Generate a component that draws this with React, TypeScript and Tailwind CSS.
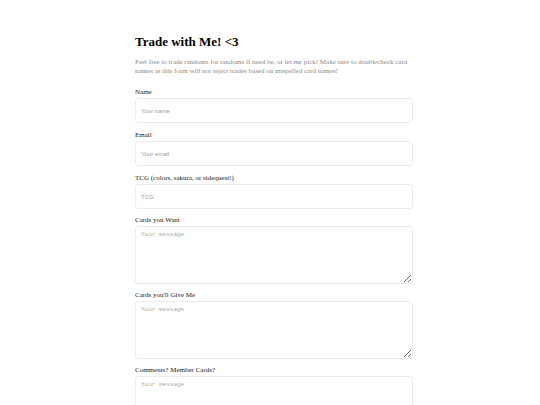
export default function App() {
  const inputs = [
    { label: "Name", placeholder: "Your name" },
    { label: "Email", placeholder: "Your email" },
    { label: "TCG (colors, sakura, or sidequest!)", placeholder: "TCG" },
  ];
  const areas = ["Cards you Want", "Cards you'll Give Me", "Comments? Member Cards?"];

  return (
    <div className="min-h-screen bg-white font-[family-name:'Liberation_Serif',serif]">
      <div className="ml-[135px] w-[278px] pt-[34px]">
        <h1 className="text-[13px] font-bold leading-[16px] text-black">Trade with Me! &lt;3</h1>
        <p className="mt-[8px] whitespace-nowrap text-[7px] leading-[9px] text-[#8a8a8a]">
          Feel free to trade randoms for randoms if need be, or let me pick! Make sure to doublecheck card
          <br />
          names as this form will not reject trades based on mispelled card names!
        </p>
        <form className="mt-[11px] flex flex-col gap-[7px]">
          {inputs.map((f) => (
            <label key={f.label} className="flex flex-col">
              <span className="mb-[1px] text-[7px] leading-[10px] text-[#222]">{f.label}</span>
              <input
                type="text"
                placeholder={f.placeholder}
                className="h-[25px] w-full rounded-[3px] border border-[#ececec] px-[5px] font-[family-name:'Liberation_Sans',sans-serif] text-[6px] text-black placeholder-[#9a9a9a] outline-none"
              />
            </label>
          ))}
          {areas.map((a) => (
            <label key={a} className="-mt-[1px] flex flex-col">
              <span className="mb-[1px] text-[7px] leading-[10px] text-[#222]">{a}</span>
              <textarea
                placeholder="Your message"
                className="block h-[58px] w-full rounded-[3px] border border-[#ececec] px-[5px] py-[4px] font-[family-name:'Liberation_Mono',monospace] text-[6px] leading-[8px] text-black placeholder-[#a8a8a8] outline-none"
              />
            </label>
          ))}
        </form>
      </div>
    </div>
  );
}
